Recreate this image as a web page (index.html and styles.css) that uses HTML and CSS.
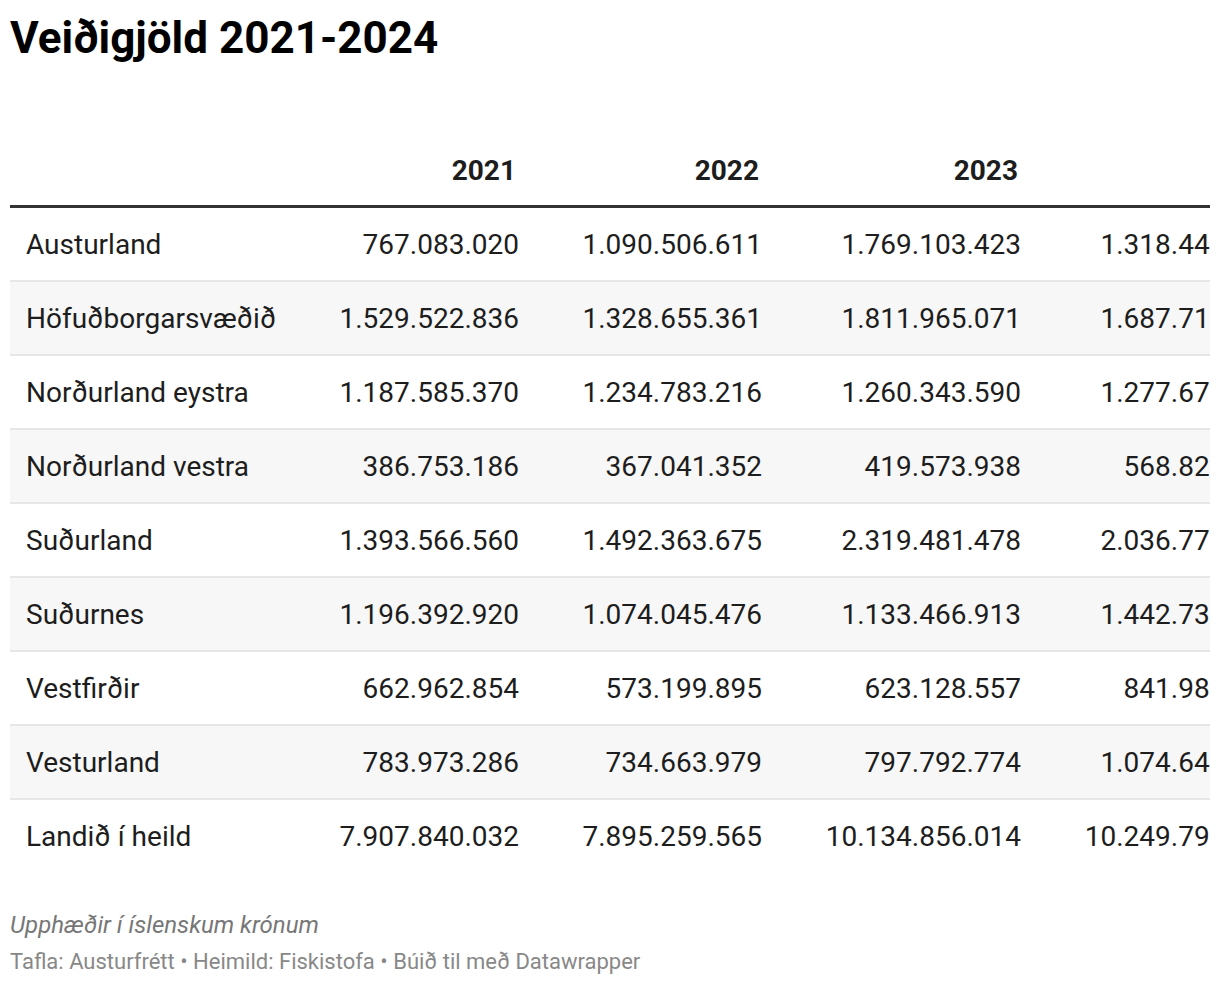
FILE: index.html
```html
<!DOCTYPE html>
<html lang="is">
<head>
<meta charset="utf-8">
<title>Veiðigjöld 2021-2024</title>
<link rel="stylesheet" href="styles.css">
</head>
<body>
<div class="chart">
  <h1 class="title">Veiðigjöld 2021-2024</h1>
  <div class="table-wrap">
    <table class="data">
      <colgroup>
        <col class="c-name">
        <col class="c-2021">
        <col class="c-2022">
        <col class="c-2023">
        <col class="c-2024">
      </colgroup>
      <thead>
        <tr>
          <th class="name"></th>
          <th>2021</th>
          <th>2022</th>
          <th>2023</th>
          <th>2024</th>
        </tr>
      </thead>
      <tbody>
        <tr><td class="name">Austurland</td><td>767.083.020</td><td>1.090.506.611</td><td>1.769.103.423</td><td>1.318.442.108</td></tr>
        <tr><td class="name">Höfuðborgarsvæðið</td><td>1.529.522.836</td><td>1.328.655.361</td><td>1.811.965.071</td><td>1.687.715.294</td></tr>
        <tr><td class="name">Norðurland eystra</td><td>1.187.585.370</td><td>1.234.783.216</td><td>1.260.343.590</td><td>1.277.671.402</td></tr>
        <tr><td class="name">Norðurland vestra</td><td>386.753.186</td><td>367.041.352</td><td>419.573.938</td><td>568.823.517</td></tr>
        <tr><td class="name">Suðurland</td><td>1.393.566.560</td><td>1.492.363.675</td><td>2.319.481.478</td><td>2.036.772.961</td></tr>
        <tr><td class="name">Suðurnes</td><td>1.196.392.920</td><td>1.074.045.476</td><td>1.133.466.913</td><td>1.442.738.250</td></tr>
        <tr><td class="name">Vestfirðir</td><td>662.962.854</td><td>573.199.895</td><td>623.128.557</td><td>841.986.633</td></tr>
        <tr><td class="name">Vesturland</td><td>783.973.286</td><td>734.663.979</td><td>797.792.774</td><td>1.074.645.827</td></tr>
        <tr><td class="name">Landið í heild</td><td>7.907.840.032</td><td>7.895.259.565</td><td>10.134.856.014</td><td>10.249.796.992</td></tr>
      </tbody>
    </table>
  </div>
  <p class="notes">Upphæðir í íslenskum krónum</p>
  <p class="byline">Tafla: Austurfrétt • Heimild: Fiskistofa • Búið til með Datawrapper</p>
</div>
</body>
</html>
```

FILE: styles.css
```css
html, body {
  margin: 0;
  padding: 0;
  background: #ffffff;
}

body {
  font-family: Roboto, "Liberation Sans", Arial, sans-serif;
  color: #1d1d1d;
}

.chart {
  padding: 0 10px;
}

.title {
  margin: 0;
  padding-top: 12px;
  font-size: 44px;
  line-height: 53px;
  font-weight: 700;
  color: #000000;
}

.table-wrap {
  margin-top: 89px;
  width: 1200px;
  overflow: hidden;
}

.data {
  border-collapse: collapse;
  table-layout: fixed;
  width: 1280px;
  font-size: 28px;
  line-height: 34px;
}

.c-name { width: 300px; }
.c-2021 { width: 219px; }
.c-2022 { width: 243px; }
.c-2023 { width: 259px; }
.c-2024 { width: 259px; }

.data th,
.data td {
  text-align: right;
  padding: 0 10px;
  white-space: nowrap;
}

.data th {
  font-weight: 700;
  color: #1d1d1d;
  padding-right: 13px;
  padding-bottom: 17px;
  vertical-align: bottom;
  border-bottom: 3px solid #333333;
}

.data td {
  padding-top: 20px;
  padding-bottom: 18px;
  font-weight: 400;
}

.data .name {
  text-align: left;
  padding-left: 16px;
}

.data tbody tr {
  border-top: 2px solid #e6e6e6;
}

.data tbody tr:first-child {
  border-top: none;
}

.data tbody tr:nth-child(even) {
  background: #f7f7f7;
}

.notes {
  margin: 38px 0 0 0;
  font-size: 24px;
  line-height: 30px;
  font-style: italic;
  color: #777777;
}

.byline {
  margin: 8px 0 0 0;
  font-size: 22px;
  line-height: 28px;
  color: #888888;
}
```
